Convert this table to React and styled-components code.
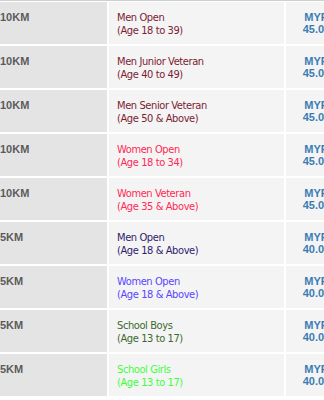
import React from "react";
import styled, { createGlobalStyle } from "styled-components";

const GlobalStyle = createGlobalStyle`
  html, body {
    margin: 0;
    padding: 0;
    background: #ffffff;
    overflow: hidden;
  }
`;

const races = [
  { dist: "10KM", name: "Men Open", age: "(Age 18 to 39)", color: "#7d1c32", fee: "45.00" },
  { dist: "10KM", name: "Men Junior Veteran", age: "(Age 40 to 49)", color: "#7d1c32", fee: "45.00" },
  { dist: "10KM", name: "Men Senior Veteran", age: "(Age 50 & Above)", color: "#7d1c32", fee: "45.00" },
  { dist: "10KM", name: "Women Open", age: "(Age 18 to 34)", color: "#ff2a55", fee: "45.00" },
  { dist: "10KM", name: "Women Veteran", age: "(Age 35 & Above)", color: "#ff2a55", fee: "45.00" },
  { dist: "5KM", name: "Men Open", age: "(Age 18 & Above)", color: "#2e1c6e", fee: "40.00" },
  { dist: "5KM", name: "Women Open", age: "(Age 18 & Above)", color: "#5a46ff", fee: "40.00" },
  { dist: "5KM", name: "School Boys", age: "(Age 13 to 17)", color: "#3b6a2e", fee: "40.00" },
  { dist: "5KM", name: "School Girls", age: "(Age 13 to 17)", color: "#3cff3c", fee: "40.00" },
];

function App() {
  return (
    <>
      <GlobalStyle />
      <Table>
        {races.map((r, i) => (
          <Row key={i}>
            <DistCell>{r.dist}</DistCell>
            <CategoryCell $color={r.color}>
              {r.name}
              <br />
              {r.age}
            </CategoryCell>
            <FeeCell>
              MYR
              <br />
              {r.fee}
            </FeeCell>
          </Row>
        ))}
      </Table>
    </>
  );
}
export default App;

const Table = styled.div`
  display: flex;
  flex-direction: column;
  gap: 2px;
  width: 360px;
  padding-top: 1px;
  border-top: 1px solid #cfcfcf;
`;

const Row = styled.div`
  display: flex;
  gap: 2px;
  height: 42px;
`;

const DistCell = styled.div`
  width: 107px;
  flex-shrink: 0;
  background: #e4e4e4;
  padding-top: 9px;
  box-sizing: border-box;
  font-family: "Liberation Sans", Arial, sans-serif;
  font-weight: bold;
  font-size: 11px;
  line-height: 13px;
  color: #5c5c5c;
`;

const CategoryCell = styled.div`
  width: 175px;
  flex-shrink: 0;
  background: #f4f4f4;
  padding: 9px 0 0 8px;
  box-sizing: border-box;
  font-family: "DejaVu Sans", Verdana, sans-serif;
  font-stretch: condensed;
  font-size: 11px;
  letter-spacing: -0.4px;
  line-height: 13px;
  color: ${(p) => p.$color};
`;

const FeeCell = styled.div`
  width: 61px;
  flex-shrink: 0;
  background: #f4f4f4;
  padding-top: 9px;
  box-sizing: border-box;
  text-align: center;
  font-family: "Liberation Sans", Arial, sans-serif;
  font-weight: bold;
  font-size: 11px;
  line-height: 12px;
  color: #3a7db5;
`;
